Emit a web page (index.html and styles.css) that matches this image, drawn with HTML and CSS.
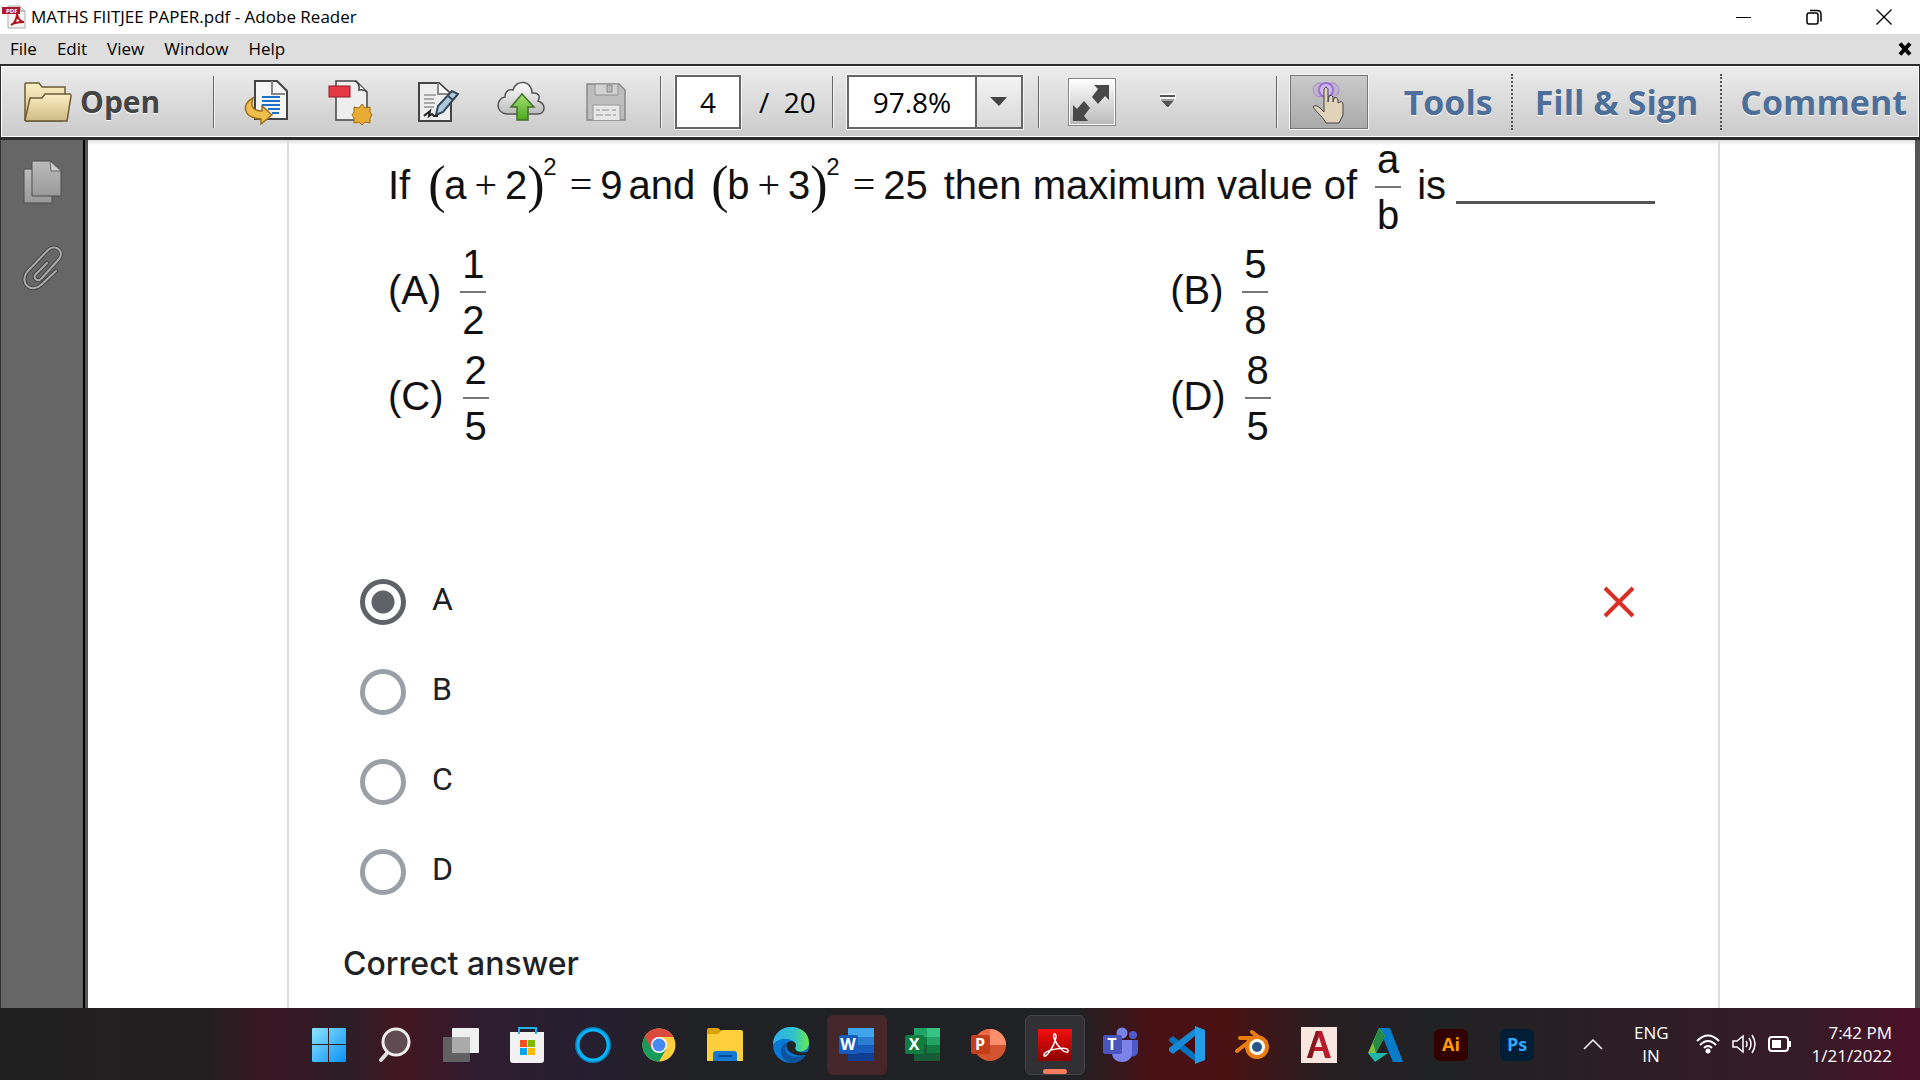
FILE: index.html
```html
<!DOCTYPE html>
<html lang="en">
<head>
<meta charset="utf-8">
<title>MATHS FIITJEE PAPER.pdf - Adobe Reader</title>
<link rel="stylesheet" href="styles.css">
</head>
<body>
<header class="titlebar">
  <svg class="app-icon" width="24" height="24" viewBox="0 0 24 24"><path d="M6 1h12l5 5v17H6z" fill="#f4f4f4" stroke="#aaa"/><path d="M18 1v5h5" fill="#ddd" stroke="#999"/><path d="M9 20c3-1 6-6 6-11 1 5 4 8 7 8M9 20c4-3 8-3 13-3" fill="none" stroke="#b0121b" stroke-width="2"/><rect y="2" width="18" height="7" fill="#b0182a"/><text x="4" y="8" class="pdf-tag">PDF</text></svg>
  <h1 class="title">MATHS FIITJEE PAPER.pdf - Adobe Reader</h1>
  <div class="window-controls">
    <button class="plain" aria-label="Minimize"><svg width="16" height="16"><path d="M0 8.500h15" stroke="#000"/></svg></button>
    <button class="plain" aria-label="Restore"><svg width="16" height="16" fill="none" stroke="#000" stroke-width="1.500"><rect x="1" y="4" width="11" height="11" rx="2"/><path d="M4 1.500h7q4 0 4 4v7"/></svg></button>
    <button class="plain" aria-label="Close"><svg width="16" height="16"><path d="M.5.5l15 15M15.500.5l-15 15" stroke="#000" stroke-width="1.300"/></svg></button>
  </div>
</header>
<nav class="menubar">
  <button class="plain menu">File</button><button class="plain menu">Edit</button><button class="plain menu">View</button><button class="plain menu">Window</button><button class="plain menu">Help</button>
  <button class="plain close-doc" aria-label="Close document"><svg width="14" height="14"><path d="M2 1.500l10 11M12 1.500l-10 11" stroke="#000" stroke-width="4"/></svg></button>
</nav>
<div class="toolbar">
  <button class="plain open"><svg width="48" height="40" viewBox="0 0 48 40"><defs><linearGradient id="fold" x2="0" y2="1"><stop stop-color="#fcf0c4"/><stop offset="1" stop-color="#cdb985"/></linearGradient></defs><path d="M1 38V2q0-1 1-1h13l3 4h23v31l-3 3H2z" fill="url(#fold)" stroke="#6c5b34" stroke-width="1.500"/><path d="M1 38L6 16h12l3-4h25q1 0 1 2l-4 25H2z" fill="url(#fold)" stroke="#6c5b34" stroke-width="1.500"/></svg><span>Open</span></button>
  <i class="sep"></i>
  <div class="tools">
    <button class="plain tool" aria-label="Export file"><svg width="46" height="46" viewBox="0 0 46 46"><path d="M12 2h22l10 10v28H12z" fill="#f5f5f5" stroke="#444" stroke-width="2"/><path d="M29 2v13h13" fill="none" stroke="#888" stroke-width="2"/><path d="M19 18h18M19 22h18M19 26h18M25 30h12M29 34h7" stroke="#1c6fcb" stroke-width="2"/><path d="M10 19C-2 25 0 39 18 40v5l11-9-10-9v5C10 32 7 27 10 19z" fill="#f0be4c" stroke="#9b701d" stroke-width="1.500"/></svg></button>
    <button class="plain tool" aria-label="Create PDF"><svg width="46" height="46" viewBox="0 0 46 46"><path d="M8 2h20l11 11v28H8z" fill="#eee" stroke="#444" stroke-width="1.500"/><path d="M27 2q5 2 4 9 5-1 8 2" fill="#fff" stroke="#444" stroke-width="1.500"/><rect x="1" y="7" width="21" height="11" fill="#e73945" stroke="#941d22"/><path d="M34 25l3 4 5-1v5l2 3-2 3v5l-5-1-3 3-3-3-5 1v-5l-2-3 2-3v-5l5 1z" fill="#e8ac35" stroke="#9b6f17"/></svg></button>
    <button class="plain tool" aria-label="Sign"><svg width="48" height="46" viewBox="0 0 48 46"><path d="M7 4h20l12 11v27H7z" fill="#eee" stroke="#444" stroke-width="2"/><path d="M26 4v11h12" fill="#fff" stroke="#888" stroke-width="2"/><path d="M12 16h12M12 20h10M12 24h11M12 28h10" stroke="#aaa" stroke-width="2"/><path d="M24 36l2-9L40 12l6 3-15 18z" fill="#afc9dd" stroke="#35495a" stroke-width="2"/><path d="M36 17l5 4" stroke="#35495a" stroke-width="2"/><path d="M12 37l6-5-1 5 3-2 2 2h4" fill="none" stroke="#222" stroke-width="2"/></svg></button>
    <button class="plain tool" aria-label="Upload"><svg width="48" height="46" viewBox="0 0 48 46"><defs><linearGradient id="cl" x2="0" y2="1"><stop stop-color="#fff"/><stop offset="1" stop-color="#bbb"/></linearGradient><linearGradient id="gr" x2="0" y2="1"><stop stop-color="#a5df73"/><stop offset="1" stop-color="#4ca81d"/></linearGradient></defs><path d="M10 35C-2 34-1 19 8 18c0-6 4-8 8-7 3-11 19-10 19 3 8-1 8 5 6 8 9 3 7 13 0 13z" fill="url(#cl)" stroke="#555" stroke-width="1.500"/><path d="M25 15l12 13h-6v13H20V28h-6z" fill="url(#gr)" stroke="#41702a" stroke-width="1.500"/></svg></button>
    <button class="plain tool" aria-label="Save"><svg width="40" height="40" viewBox="0 0 40 40"><path d="M1 2h32l6 6v30H1z" fill="#bdbdbd" stroke="#898989" stroke-width="1.500"/><path d="M9 2h23v11H9z" fill="#d2d2d2" stroke="#929292"/><path d="M21 3h5v7h-5z" fill="#bbb" stroke="#888"/><path d="M7 38V23h27v15" fill="#e7e7e7" stroke="#999"/><path d="M10 28h4m2 0h7m3 0h4M10 33h7m2 0h6m2 0h3" stroke="#bbb" stroke-width="2"/></svg></button>
  </div>
  <i class="sep"></i>
  <input class="field page-field" aria-label="Page number" value="4">
  <span class="count">/&nbsp; 20</span>
  <i class="sep"></i>
  <div class="zoom"><input class="zoom-field" aria-label="Zoom" value="97.8%"><button class="zoom-drop" aria-label="Zoom levels"><svg width="18" height="10"><path d="M0 0h17l-8 9z" fill="#444"/></svg></button></div>
  <i class="sep"></i>
  <button class="full" aria-label="Full screen"><svg width="44" height="44" viewBox="0 0 44 44"><path d="M25 5h15v15l-4-4-7 8-6-7 6-8zM4 25l4 4 7-8 6 7-6 8 4 5H4z" fill="#484848"/></svg></button>
  <button class="plain more" aria-label="More tools"><svg width="18" height="18"><path d="M1 3h16" stroke="#fff" stroke-width="5"/><path d="M1 3h15M2 7h13" stroke="#555" stroke-width="2"/><path d="M1 7h15l-7 8z" fill="#555" stroke="#eee"/></svg></button>
  <div class="right-tools">
    <i class="sep"></i>
    <button class="hand" aria-label="Touch mode"><svg width="38" height="44" viewBox="0 0 38 44"><g fill="#b99bdc" fill-opacity=".4" stroke="#a78bcb"><circle cx="10" cy="10" r="7"/><circle cx="22" cy="10" r="7"/></g><circle cx="16" cy="10" r="7" fill="#d3b9f3" stroke="#9b72d0" stroke-width="2"/><path d="M14 9q2-4 4 0v13l1-6q3-2 4 1v5l1-4q3-2 4 2v3q4-3 5 1v11l-4 8H16c-3-6-7-8-13-16q3-3 7 1l4 4z" fill="#e1d2ba" stroke="#444"/></svg></button>
    <button class="plain pane">Tools</button><i class="dots"></i><button class="plain pane wide">Fill &amp; Sign</button><i class="dots"></i><button class="plain pane">Comment</button>
  </div>
</div>
<div class="workspace">
  <aside class="rail">
    <button class="plain" aria-label="Page thumbnails"><svg width="42" height="46" viewBox="0 0 42 46"><defs><linearGradient id="pg" x2="0" y2="1"><stop stop-color="#bbb"/><stop offset="1" stop-color="#999"/></linearGradient></defs><path d="M2 10h28v34H2z" fill="url(#pg)" stroke="#4c4c4c"/><path d="M10 2h19l10 10v25H10z" fill="url(#pg)" stroke="#4c4c4c"/><path d="M28 2l1 10h10z" fill="#ccc" stroke="#666"/></svg></button>
    <button class="plain" aria-label="Attachments"><svg width="42" height="46" viewBox="0 0 42 46" fill="none" stroke-linecap="round"><path d="M34 26L19 40C9 49-3 38 5 27L26 5C34-2 43 7 37 14L20 33c-4 5-10 0-6-4L25 18" stroke="#444" stroke-width="4"/><path d="M34 26L19 40C9 49-3 38 5 27L26 5C34-2 43 7 37 14L20 33c-4 5-10 0-6-4L25 18" stroke="#aaa" stroke-width="2"/></svg></button>
  </aside>
  <main class="page">
    <section class="card">
      <div class="problem">
        <div class="formula">
          <span>If</span>
          <span class="square gap-l"><b class="paren">(</b>a<b class="op">+</b>2<b class="paren">)</b><sup>2</sup></span><b class="op eq">=</b><span>9</span><span class="gap-s">and</span>
          <span class="square gap-m"><b class="paren">(</b>b<b class="op">+</b>3<b class="paren">)</b><sup>2</sup></span><b class="op eq">=</b><span>25</span><span class="gap-m">then maximum value of</span>
          <span class="frac gap-l"><span>a</span><span>b</span></span><span class="gap-m">is</span><i class="blank"></i>
        </div>
        <div class="choices">
          <div class="formula"><span>(A)</span><span class="frac gap-xl"><span>1</span><span>2</span></span></div>
          <div class="formula"><span>(B)</span><span class="frac gap-xl"><span>5</span><span>8</span></span></div>
          <div class="formula"><span>(C)</span><span class="frac gap-xl"><span>2</span><span>5</span></span></div>
          <div class="formula"><span>(D)</span><span class="frac gap-xl"><span>8</span><span>5</span></span></div>
        </div>
      </div>
      <div class="answers">
        <div class="answer"><input type="radio" name="answer" id="a" checked><label for="a">A</label><svg class="wrong" width="32" height="32"><path d="M2 2l28 28M30 2L2 30" stroke="#d93025" stroke-width="4"/></svg></div>
        <div class="answer"><input type="radio" name="answer" id="b"><label for="b">B</label></div>
        <div class="answer"><input type="radio" name="answer" id="c"><label for="c">C</label></div>
        <div class="answer"><input type="radio" name="answer" id="d"><label for="d">D</label></div>
      </div>
      <h2 class="correct">Correct answer</h2>
    </section>
  </main>
</div>
<footer class="taskbar">
  <div class="apps">
    <button class="app" aria-label="Start"><svg width="36" height="36"><defs><linearGradient id="win" x2="1" y2="1"><stop stop-color="#8ce4ff"/><stop offset="1" stop-color="#0b90f5"/></linearGradient></defs><path d="M1 2q0-1 1-1h15v16H1zM18 1h16q1 0 1 1v15H18zM1 18h16v17H2q-1 0-1-1zM18 18h17v16q0 1-1 1H18z" fill="url(#win)"/></svg></button>
    <button class="app" aria-label="Search"><svg width="36" height="36"><path d="M11 25l-7 8" stroke="#ddd" stroke-width="4" stroke-linecap="round"/><circle cx="19" cy="15" r="13" fill="#604b52" stroke="#eee" stroke-width="3"/></svg></button>
    <button class="app" aria-label="Task view"><svg width="36" height="36"><rect y="10" width="27" height="25" rx="1" fill="#616161"/><rect x="9" y="1" width="27" height="25" rx="1" fill="#f0f0f0"/><path d="M9 10h18v16H9z" fill="#aaa"/></svg></button>
    <button class="app" aria-label="Microsoft Store"><svg width="36" height="38"><path d="M1 6h34v28q0 3-3 3H4q-3 0-3-3z" fill="#f1f1f1"/><path d="M10 8V2h17v6" fill="none" stroke="#23aee8" stroke-width="2"/><path d="M11 14h7v7h-7z" fill="#f25022"/><path d="M19 14h7v7h-7z" fill="#7fba00"/><path d="M11 22h7v7h-7z" fill="#00a4ef"/><path d="M19 22h7v7h-7z" fill="#ffb900"/></svg></button>
    <button class="app" aria-label="Cortana"><svg width="38" height="38" fill="none"><circle cx="19" cy="19" r="16" stroke="#087eb8" stroke-width="4"/><circle cx="19" cy="19" r="15" stroke="#05b5fb" stroke-width="3"/></svg></button>
    <button class="app" aria-label="Chrome"><svg width="34" height="34" viewBox="0 0 34 34"><circle cx="17" cy="17" r="16.500" fill="#ffcd40"/><path d="M17 17L2.700 8.700A16.500 16.500 0 0 0 17 33.500l7-12z" fill="#199a5a"/><path d="M2.700 8.700A16.500 16.500 0 0 1 31.500 9H17l-7 12z" fill="#db4a3f"/><circle cx="17" cy="17" r="8" fill="#fff"/><circle cx="17" cy="17" r="6.500" fill="#4688f4"/></svg></button>
    <button class="app" aria-label="File Explorer"><svg width="36" height="34"><path d="M0 2q0-2 2-2h9l5 4h18q2 0 2 2v6H0z" fill="#dda003"/><path d="M0 6h11l4-4h19q2 0 2 2v29H0z" fill="#ffce3d"/><path d="M6 33V26q0-3 3-3h18q3 0 3 3v7z" fill="#1378cf"/><path d="M11 28h14" stroke="#06498e" stroke-width="2"/></svg></button>
    <button class="app" aria-label="Edge"><svg width="38" height="38" viewBox="0 0 38 38"><defs><linearGradient id="eg"><stop stop-color="#31aee9"/><stop offset=".6" stop-color="#2fc5c7"/><stop offset="1" stop-color="#6bea45"/></linearGradient></defs><circle cx="19" cy="19" r="18" fill="#0878d2"/><path d="M1 19C1-5 37-4 37 17c0 8-9 10-13 8-3-2-1-3 0-5 1-6-15-12-23-1z" fill="url(#eg)"/><path d="M15 17c-6 8 2 18 19 12-6 9-17 11-23 3-4-6-2-13 4-15z" fill="#10519d"/><path d="M24 20c0-5-6-6-9-3-3 8 7 14 19 12l4-4c-6 3-18 1-14-5z" fill="#222126"/></svg></button>
    <button class="app open-word" aria-label="Word"><svg width="36" height="36"><path d="M9 1h26v9H9z" fill="#41a5ee"/><path d="M9 10h26v8H9z" fill="#2b7cd3"/><path d="M9 18h26v8H9z" fill="#185abd"/><path d="M9 26h26v8H9z" fill="#103f91"/><rect y="8" width="19" height="19" rx="2" fill="#185abd"/><text x="9" y="23" class="glyph">W</text></svg></button>
    <button class="app" aria-label="Excel"><svg width="36" height="36"><path d="M9 1h13v9H9z" fill="#21a366"/><path d="M22 1h13v9H22z" fill="#33c481"/><path d="M9 10h13v8H9z" fill="#107c41"/><path d="M22 10h13v8H22z" fill="#21a366"/><path d="M9 18h26v16H9z" fill="#185c37"/><path d="M22 18h13v8H22z" fill="#107c41"/><rect y="8" width="19" height="19" rx="2" fill="#107c41"/><text x="9" y="23" class="glyph">X</text></svg></button>
    <button class="app" aria-label="PowerPoint"><svg width="36" height="36"><circle cx="19" cy="18" r="16" fill="#d35230"/><path d="M19 18V2a16 16 0 0 0-16 16z" fill="#ed6c47"/><path d="M19 18V2a16 16 0 0 1 16 16z" fill="#ff8f6b"/><rect y="8" width="19" height="19" rx="2" fill="#c43e1c"/><text x="9" y="23" class="glyph">P</text></svg></button>
    <button class="app active" aria-label="Adobe Reader"><svg width="34" height="34"><defs><linearGradient id="ar" x2="0" y2="1"><stop stop-color="#f50f0f"/><stop offset="1" stop-color="#8b0000"/></linearGradient></defs><path d="M0 1h34v32H0z" fill="url(#ar)"/><path d="M17 6c-4 0 1 10 6 15 4 4 8 4 7 1-2-4-24 0-24 5 0 5 10-7 12-18 0-2 0-3-1-3z" fill="none" stroke="#fff" stroke-width="1.500"/></svg></button>
    <button class="app" aria-label="Teams"><svg width="36" height="36"><circle cx="30" cy="8" r="4" fill="#5059c9"/><circle cx="19" cy="6" r="5.500" fill="#7b83eb"/><path d="M25 13h10v12q-2 6-8 4z" fill="#5059c9"/><path d="M9 13h20v13c0 12-20 12-20 0z" fill="#7b83eb"/><rect y="8" width="19" height="19" rx="2" fill="#4b53bc"/><text x="9" y="23" class="glyph">T</text></svg></button>
    <button class="app" aria-label="Visual Studio Code"><svg width="38" height="38" viewBox="0 0 38 38"><path d="M1 13l4-3 24 19v8L1 15z" fill="#0072be"/><path d="M1 25l4 3 24-19V1L1 22z" fill="#1689d6"/><path d="M27 0l10 4v30l-10 4V28L16 19l11-9z" fill="#249de8"/><path d="M27 10v18l-11-9z" fill="#48090c"/></svg></button>
    <button class="app" aria-label="Blender"><svg width="36" height="34"><path d="M2 23L19 10H5M17 4l14 11" fill="none" stroke="#e87d0d" stroke-width="4" stroke-linecap="round"/><circle cx="22" cy="19" r="12" fill="#e87d0d"/><circle cx="22" cy="19" r="8" fill="#fff"/><circle cx="22" cy="19" r="5" fill="#265787"/></svg></button>
    <button class="app" aria-label="AutoCAD"><svg width="36" height="36"><path d="M0 0h36v36H0z" fill="#f9e6df"/><path d="M6 31L15 4h6l9 27h-6l-2-7H13l-2 7zM14 20h7L18 10z" fill="#b91b2a" fill-rule="evenodd"/><path d="M6 31l9-27h3l-7 27z" fill="#821a23"/></svg></button>
    <button class="app" aria-label="Autodesk"><svg width="36" height="36"><path d="M12 1h11l13 34H26z" fill="#087bc8"/><path d="M12 1L1 26h8L18 9z" fill="#7fbf42"/><path d="M1 26h20L8 35z" fill="#20b5a7"/><path d="M12 1l6 8-9 17-3-10z" fill="#268b45"/></svg></button>
    <button class="app" aria-label="Illustrator"><span class="adobe ai">Ai</span></button>
    <button class="app" aria-label="Photoshop"><span class="adobe ps">Ps</span></button>
  </div>
  <div class="tray">
    <button class="plain" aria-label="Hidden icons"><svg width="20" height="12"><path d="M1 11l9-9 9 9" fill="none" stroke="#fff" stroke-width="1.500"/></svg></button>
    <span class="lang">ENG<br>IN</span>
    <button class="plain status" aria-label="Network, volume and battery">
      <svg width="24" height="20" viewBox="0 0 24 20" fill="none" stroke="#fff" stroke-width="2"><path d="M1 7q11-11 22 0M4 11q8-8 16 0M8 14q4-4 8 0"/><circle cx="12" cy="17" r="1.500" fill="#fff" stroke="#fff"/></svg>
      <svg width="24" height="20" viewBox="0 0 24 20" fill="none" stroke="#fff" stroke-width="1.500"><path d="M1 7h4l6-5v16l-6-5H1zM14 7q2 3 0 6M17 4q4 6 0 12M20 1q6 9 0 18"/></svg>
      <svg width="24" height="20" viewBox="0 0 24 20"><rect x="1" y="3" width="19" height="14" rx="3" fill="none" stroke="#fff" stroke-width="2"/><path d="M4 6h9v8H4zM21 7h2v6h-2z" fill="#fff"/></svg>
    </button>
    <time class="clock">7:42 PM<br>1/21/2022</time>
  </div>
</footer>
</body>
</html>
```
FILE: styles.css
```css
* { box-sizing: border-box; }
body {
  margin: 0;
  min-height: 100vh;
  display: flex;
  flex-direction: column;
  font-family: "Open Sans", "Noto Sans", sans-serif;
  background: #fff;
  color: #000;
}
svg { display: block; flex: none; }
button { font: inherit; color: inherit; cursor: pointer; }
.plain { border: 0; padding: 0; background: none; }

/* Window chrome */
.titlebar { display: flex; align-items: center; height: 34px; padding: 0 10px 0 2px; }
.title { margin: 0 0 0 5px; font-size: 17px; font-weight: 400; line-height: 34px; }
.pdf-tag { font: bold 6px "Open Sans", sans-serif; fill: #fff; }
.window-controls { display: flex; gap: 54px; margin-left: auto; padding-right: 18px; }
.menubar { display: flex; align-items: center; gap: 20px; height: 30px; padding: 0 8px 0 10px; background: #dedede; }
.menu { font-size: 17px; line-height: 30px; }
.close-doc { margin-left: auto; }

/* Toolbar */
.toolbar {
  display: flex;
  align-items: center;
  height: 76px;
  border: solid #2c2c2c;
  border-width: 2px 1px 3px;
  box-shadow: inset 0 0 0 1px #fff;
  background: linear-gradient(#ededed, #cacaca);
}
.sep { flex: none; width: 2px; height: 52px; background: #666; border-right: 1px solid #f4f4f4; }
.open { display: flex; align-items: center; gap: 8px; width: 212px; padding-left: 23px; font-size: 30px; font-weight: 700; color: #444; text-shadow: 0 1px #fff; }
.tools { display: flex; padding: 0 12px 0 8px; }
.tool { display: grid; place-items: center; width: 85px; height: 50px; }
.field, .zoom { height: 54px; border: 2px solid #666; background: #fff; outline: 1px solid #f6f6f6; }
.page-field { width: 66px; margin-left: 13px; padding: 0; font: 28px "Open Sans", sans-serif; text-align: center; }
.count { width: 91px; padding-left: 18px; font-size: 28px; white-space: nowrap; }
.zoom { display: flex; width: 176px; margin: 0 15px 0 13px; }
.zoom-field { flex: 1; min-width: 0; border: 0; padding: 0; font: 28px "Open Sans", sans-serif; text-align: center; }
.zoom-drop { display: grid; place-items: center; width: 46px; border: 0; border-left: 2px solid #666; padding: 0; background: linear-gradient(#f4f4f4, #d8d8d8); }
.full { width: 48px; height: 48px; margin-left: 28px; padding: 0; border: 1px solid #888; box-shadow: inset 0 0 0 1px #fff; background: linear-gradient(#fff, #b8b8b8); }
.more { margin-left: 43px; }
.right-tools { display: flex; align-items: center; margin-left: auto; padding-right: 12px; }
.hand { display: grid; place-items: center; width: 78px; height: 54px; margin: 0 36px 0 12px; padding: 0; border: 1px solid #777; outline: 1px solid #f4f4f4; background: linear-gradient(#cacaca, #aaa); }
.pane { font-size: 34px; font-weight: 700; line-height: 54px; color: #4d6f99; text-shadow: 0 1px #fff; white-space: nowrap; }
.wide { padding: 0 4px; }
.dots { height: 56px; margin: 0 18px; border-left: 2px dotted #555; }

/* Document area */
.workspace { flex: 1; display: flex; background: #555; padding-right: 5px; }
.rail { display: flex; flex-direction: column; align-items: center; gap: 40px; width: 85px; padding: 19px 0 0; margin-right: 3px; border-left: 1px solid #333; border-right: 2px solid #000; background: #666; }
.rail .plain { margin-left: 2px; }
.page { flex: 1; min-width: 0; padding: 0 195px 0 199px; background: linear-gradient(#ddd, #fff 5px); }
.card { height: 100%; border: solid #dadce0; border-width: 0 2px; font-family: "Liberation Sans", Arial, sans-serif; }
.problem { padding: 0 59px 0 99px; font-size: 40px; color: #111; }
.formula { display: flex; align-items: center; height: 91px; line-height: 44px; white-space: nowrap; }
.formula > :not(.frac) { padding-bottom: 1px; }
.square { display: flex; align-items: center; }
.paren { width: 16px; font: 400 52px/44px "Liberation Serif", serif; }
.op { margin: 0 8px; font: 400 40px/44px "Liberation Serif", serif; }
.eq { margin-left: 13px; }
.square sup { align-self: flex-start; font-size: 24px; line-height: 8px; }
.gap-s { margin-left: 6px; }
.gap-m { margin-left: 16px; }
.gap-l { margin-left: 18px; }
.gap-xl { margin-left: 19px; }
.frac { display: flex; flex-direction: column; width: 26px; text-align: center; line-height: 34px; }
.frac > :first-child { padding: 2px 0 10px; border-bottom: 2px solid #777; }
.frac > :last-child { padding-top: 10px; margin-bottom: -1px; }
.formula > .blank { width: 199px; height: 3px; margin: 33px 0 0 10px; padding: 0; background: #555; }
.choices { display: grid; grid-template-columns: 8fr 5fr; gap: 15px 0; padding-top: 14px; }

/* Answer options */
.answers { padding: 115px 83px 0 71px; font-family: Roboto, sans-serif; font-size: 32px; color: #202124; }
.answer { display: flex; align-items: center; gap: 26px; height: 90px; }
.answer input { appearance: none; width: 46px; height: 46px; margin: 0; border: 5px solid #9aa0a6; border-radius: 50%; }
.answer input:checked { border-color: #5f6368; background: radial-gradient(circle, #5f6368 11px, transparent 12px); }
.answer label { padding-bottom: 6px; }
.wrong { margin-left: auto; }
.correct { margin: 27px 0 20px; padding-left: 54px; font: 500 32px/40px Inter, sans-serif; color: #202124; }

/* Taskbar */
.taskbar {
  display: flex;
  height: 72px;
  color: #fff;
  background: linear-gradient(90deg, #202020 0, #231f20 11%, #3b1724 14%, #2c1e26 18%, #421621 21%, #2f1c30 25%, #251f30 31%, #202124 36%, #202124 56%, #481114 60%, #4a1113 64%, #271f22 69%, #202224 75%, #2c1e25 84%, #351b26 94%, #4c102a 100%);
}
.apps { display: flex; align-items: center; gap: 6px; margin-left: auto; padding-top: 2px; }
.app { display: grid; place-items: center; width: 60px; height: 60px; padding: 0; border: 1px solid transparent; border-radius: 6px; background: none; }
.open-word { background: #462729; }
.active { position: relative; border-color: #414146; background: #303035; }
.active::after { content: ""; position: absolute; left: 17px; bottom: 0; width: 24px; height: 5px; border-radius: 3px; background: #f77b61; }
.glyph { font: bold 16px "Open Sans", sans-serif; fill: #fff; text-anchor: middle; }
.adobe { width: 34px; height: 32px; border-radius: 6px; font-size: 18px; font-weight: 700; line-height: 31px; }
.ai { background: #330000; color: #ff9a00; }
.ps { background: #001e36; color: #31a8ff; }
.tray { display: flex; align-items: center; margin-left: 36px; padding-right: 28px; font-size: 17px; line-height: 23px; }
.lang { width: 34px; margin: 0 28px 0 31px; text-align: center; }
.status { display: flex; gap: 12px; }
.clock { width: 100px; text-align: right; }
```
